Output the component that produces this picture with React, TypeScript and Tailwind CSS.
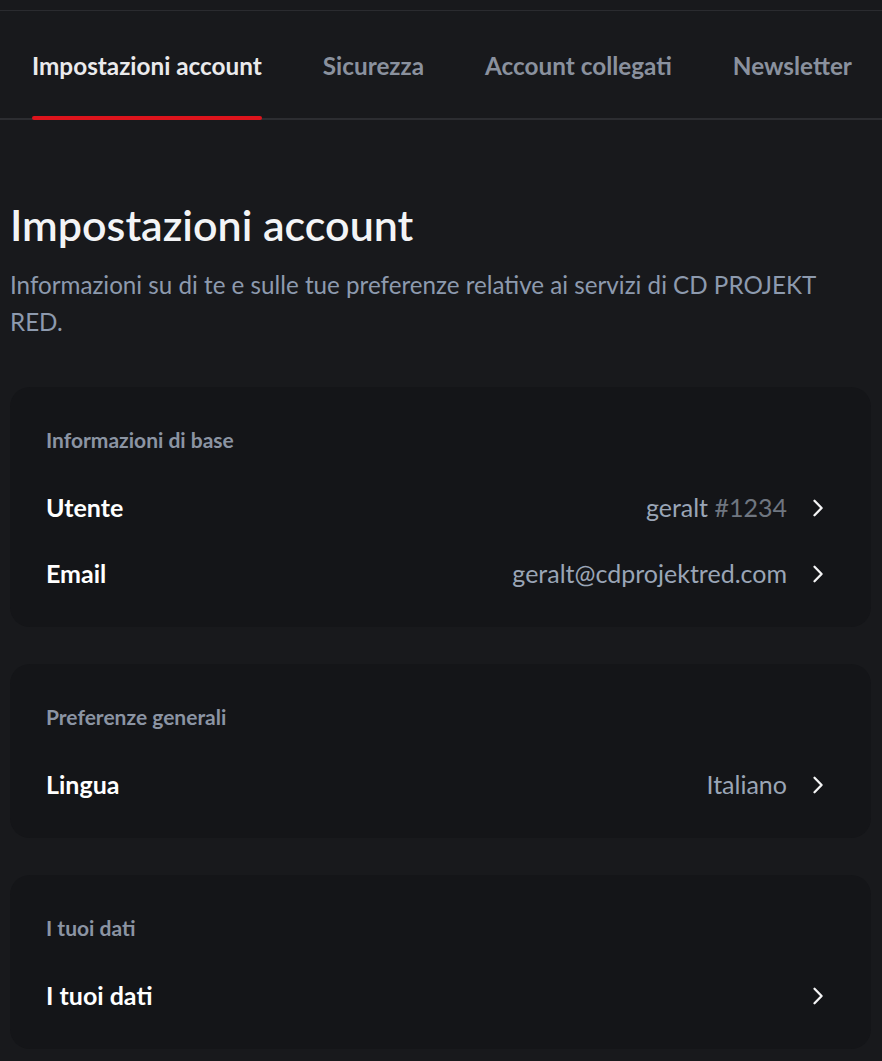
import React from 'react';

type Row = { label: string; value?: React.ReactNode };
type Section = { title: string; rows: Row[] };

const TABS = ['Impostazioni account', 'Sicurezza', 'Account collegati', 'Newsletter'];

const SECTIONS: Section[] = [
  {
    title: 'Informazioni di base',
    rows: [
      {
        label: 'Utente',
        value: (
          <>
            geralt <span className="text-[#6f7680]">#1234</span>
          </>
        ),
      },
      { label: 'Email', value: 'geralt@cdprojektred.com' },
    ],
  },
  {
    title: 'Preferenze generali',
    rows: [{ label: 'Lingua', value: 'Italiano' }],
  },
  {
    title: 'I tuoi dati',
    rows: [{ label: 'I tuoi dati' }],
  },
];

const Chevron = () => (
  <svg width="12" height="18" viewBox="0 0 12 18" fill="none" className="shrink-0">
    <path d="M2.5 1.8 L9.6 9 L2.5 16.2" stroke="#f4f4f5" strokeWidth="2.3" strokeLinecap="round" strokeLinejoin="round" />
  </svg>
);

const SettingsCard = ({ section }: { section: Section }) => (
  <div className="rounded-[20px] bg-[#141518] pl-9 pr-[47px] pt-[40px] pb-5">
    <div className="text-[21px] leading-[26px] font-bold text-[#8b94a3]">{section.title}</div>
    <div className="mt-[22px]">
      {section.rows.map((row) => (
        <div key={row.label} className="flex h-[66px] items-center justify-between">
          <span className="text-[25px] font-bold text-white">{row.label}</span>
          <div className="flex items-center gap-[25px]">
            {row.value && <span className="text-[25px] text-[#9aa5b6]">{row.value}</span>}
            <Chevron />
          </div>
        </div>
      ))}
    </div>
  </div>
);

export default function App() {
  return (
    <div className="min-h-screen bg-[#18191c] font-['Lato','Liberation_Sans',sans-serif]">
      <div className="h-[11px] border-b border-[#2a2b2f]" />

      {/* tabs */}
      <div className="flex border-b-2 border-[#2c2d31] pl-[1.5px]">
        {TABS.map((tab, i) => (
          <div key={tab} className="px-[30.5px] pt-[41px] pb-[37px]">
            <div className="relative">
              <span
                className={`text-[24.3px] leading-7 font-bold whitespace-nowrap ${
                  i === 0 ? 'text-[#eaeaec]' : 'text-[#8a919e]'
                }`}
              >
                {tab}
              </span>
              {i === 0 && (
                <div className="absolute left-0 right-0 -bottom-[39px] h-1 rounded-full bg-[#dd141c]" />
              )}
            </div>
          </div>
        ))}
      </div>

      <div className="pl-[10px] pr-[11px] pt-[80px] pb-10">
        <h1 className="text-[43px] leading-[50px] font-semibold text-[#f3f4f6]">Impostazioni account</h1>
        <p className="mt-[16px] pr-[8px] text-[24.2px] leading-[37px] text-[#8d9aae]">
          Informazioni su di te e sulle tue preferenze relative ai servizi di CD PROJEKT RED.
        </p>

        <div className="mt-[47px] flex flex-col gap-[37px]">
          {SECTIONS.map((s) => (
            <SettingsCard key={s.title} section={s} />
          ))}
        </div>
      </div>
    </div>
  );
}
